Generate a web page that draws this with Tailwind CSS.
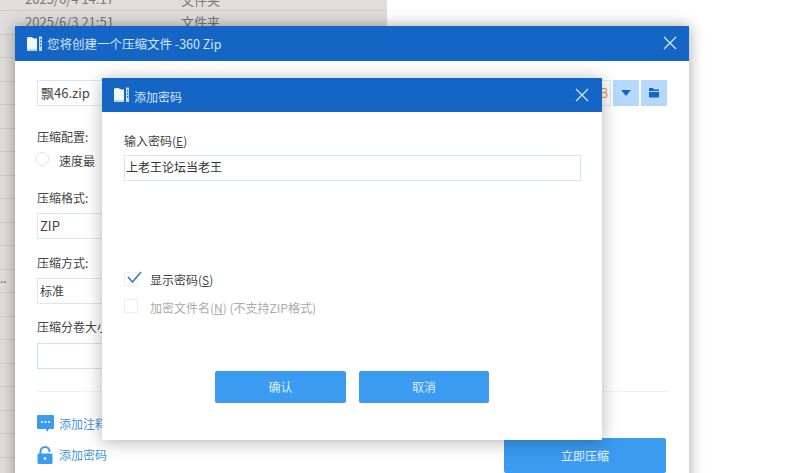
<!DOCTYPE html>
<html lang="zh">
<head>
<meta charset="utf-8">
<script src="https://cdn.jsdelivr.net/npm/@tailwindcss/browser@4"></script>
</head>
<body class="m-0 bg-white">
<div class="relative w-[800px] h-[473px] overflow-hidden bg-white font-['Noto_Sans_CJK_SC','Noto_Sans',sans-serif] text-[12px] text-[#444]">

  <!-- background explorer window -->
  <div class="absolute left-0 top-0 w-[387px] h-[473px] bg-[#e0dedd] overflow-hidden">
    <div class="h-[11px] border-b border-[#cfcecd] relative"><span class="absolute left-[25px] top-[-10px] text-[#777] text-[13px] leading-[18px]">2025/6/4 14:17</span><span class="absolute left-[181px] top-[-9px] text-[#777] text-[13px] leading-[18px]">文件夹</span></div>
    <div class="h-[23.5px] border-b border-[#cfcecd] relative"><span class="absolute left-[25px] top-[2px] text-[#777] text-[13px] leading-[18px]">2025/6/3 21:51</span><span class="absolute left-[181px] top-[2px] text-[#777] text-[13px] leading-[18px]">文件夹</span></div>
    <div class="h-[23.5px] border-b border-[#cfcecd]"></div>
    <div class="h-[23.5px] border-b border-[#cfcecd]"></div>
    <div class="h-[23.5px] border-b border-[#cfcecd]"></div>
    <div class="h-[23.5px] border-b border-[#cfcecd]"></div>
    <div class="h-[23.5px] border-b border-[#cfcecd]"></div>
    <div class="h-[23.5px] border-b border-[#cfcecd]"></div>
    <div class="h-[23.5px] border-b border-[#cfcecd]"></div>
    <div class="h-[23.5px] border-b border-[#cfcecd]"></div>
    <div class="h-[23.5px] border-b border-[#cfcecd]"></div>
    <div class="h-[23.5px] border-b border-[#cfcecd]"></div>
    <div class="h-[23.5px] border-b border-[#cfcecd] relative"><span class="absolute left-0 top-[-1px] text-[#555]">..</span></div>
    <div class="h-[23.5px] border-b border-[#cfcecd]"></div>
    <div class="h-[23.5px] border-b border-[#cfcecd]"></div>
    <div class="h-[23.5px] border-b border-[#cfcecd]"></div>
    <div class="h-[23.5px] border-b border-[#cfcecd]"></div>
    <div class="h-[23.5px] border-b border-[#cfcecd]"></div>
    <div class="h-[23.5px] border-b border-[#cfcecd]"></div>
    <div class="h-[23.5px] border-b border-[#cfcecd]"></div>
  </div>

  <!-- main window -->
  <div class="absolute left-[15px] top-[26px] w-[674px] h-[470px] bg-white shadow-[0_0_14px_rgba(0,0,0,0.36)]">
    <div class="h-[35px] bg-[#1565c4] flex items-center pl-[11px] pr-[11px] text-[#d6e6f8]">
      <svg width="18" height="18" viewBox="0 0 18 18" class="mr-[3px] shrink-0"><path d="M1 2.500C3.500 1.500 6.500 2 8 3.500L11 3.500V16H1Z" fill="#f2f7fd"/><path d="M1 14h10v2H1Z" fill="#b9d2ee"/><rect x="13" y="1.500" width="3" height="14.500" fill="#c6dcf4"/><rect x="14" y="4" width="1.200" height="1.500" fill="#1565c4"/><rect x="14" y="7" width="1.200" height="1.500" fill="#1565c4"/><rect x="14" y="10" width="1.200" height="1.500" fill="#1565c4"/></svg>
      <span class="text-[12.5px] pt-[2px]">您将创建一个压缩文件 -360 Zip</span>
      <svg width="14" height="14" viewBox="0 0 14 14" class="ml-auto mr-[1px] mb-[2px]"><path d="M1 1L13 13M13 1L1 13" stroke="#d8e8fa" stroke-width="1.200" fill="none"/></svg>
    </div>
    <div class="pl-[22px] pr-[22px] pt-[19px]">
      <div class="flex gap-[2px] h-[26px]">
        <div class="flex-1 border border-[#d7e8f4] pl-[3px] pr-[2px] flex items-center text-[13px] text-[#444]"><span>飘46.zip</span><span class="ml-auto text-[#e59a45] text-[13px]">B</span></div>
        <div class="w-[26px] bg-[#b5d8fb] flex items-center justify-center"><svg width="12" height="8" viewBox="0 0 12 8"><path d="M1 1h10L6 7Z" fill="#1565c4"/></svg></div>
        <div class="w-[26px] bg-[#b5d8fb] flex items-center justify-center"><svg width="12" height="10" viewBox="0 0 12 10"><path d="M1 0h4l1 1.500h5V3H1ZM1 4h10v5.500H1Z" fill="#1565c4"/></svg></div>
      </div>
      <div class="mt-[22px] h-[18px] leading-[18px]">压缩配置:</div>
      <div class="mt-[6px] flex items-center h-[18px]">
        <span class="w-[14px] h-[14px] rounded-full border border-[#dfe3e6] ml-[-2px] mt-[-4px]"></span>
        <span class="ml-[10px]">速度最</span>
      </div>
      <div class="mt-[19px] h-[18px] leading-[18px]">压缩格式:</div>
      <div class="mt-[6px] h-[26px] w-[200px] border border-[#d7e8f4] pl-[2px] flex items-center text-[13px]">ZIP</div>
      <div class="mt-[15px] h-[18px] leading-[18px]">压缩方式:</div>
      <div class="mt-[6px] h-[26px] w-[200px] border border-[#d7e8f4] pl-[2px] flex items-center">标准</div>
      <div class="mt-[14px] h-[18px] leading-[18px]">压缩分卷大小</div>
      <div class="mt-[7px] h-[26px] w-[200px] border border-[#d0e2f0]"></div>
      <div class="mt-[22px] border-t border-[#f1f1f1] mr-[-1px]"></div>
      <div class="flex justify-between">
        <div class="pt-[22px]">
          <div class="flex items-center h-[20px] gap-[5px] text-[#4a94d6]">
            <svg width="17" height="18" viewBox="0 0 17 18" class="shrink-0"><path d="M1 0h15a1 1 0 0 1 1 1v12a1 1 0 0 1-1 1h-4l-2 3-1-3H1a1 1 0 0 1-1-1V1a1 1 0 0 1 1-1Z" fill="#3d9bef"/><circle cx="5" cy="7" r="1" fill="#fff"/><circle cx="8.500" cy="7" r="1" fill="#fff"/><circle cx="12" cy="7" r="1" fill="#fff"/></svg>
            <span>添加注释</span>
          </div>
          <div class="flex items-center h-[20px] gap-[6px] mt-[11px] text-[#4a94d6]">
            <svg width="16" height="18" viewBox="0 0 16 18" class="shrink-0"><path d="M3.500 8V5.500a4.500 4.500 0 0 1 9 0V6" stroke="#3d9bef" stroke-width="2" fill="none"/><rect x="0.500" y="7.500" width="15" height="10.500" rx="1.500" fill="#3d9bef"/><circle cx="8" cy="12.500" r="1.300" fill="#fff"/></svg>
            <span>添加密码</span>
          </div>
        </div>
        <button class="mt-[46px] mr-[1px] w-[162px] h-[35px] rounded-[2px] bg-[#3b9bf0] text-[#e8f3fe] text-[12px]">立即压缩</button>
      </div>
    </div>
  </div>

  <!-- password dialog -->
  <div class="absolute left-[102px] top-[78px] w-[500px] h-[362px] bg-white shadow-[0_2px_16px_rgba(0,0,0,0.3)] flex flex-col">
    <div class="h-[34px] bg-[#1565c4] flex items-center pl-[11px] pr-[13px] text-[#d6e6f8]">
      <svg width="18" height="18" viewBox="0 0 18 18" class="mr-[3px] shrink-0"><path d="M1 2.500C3.500 1.500 6.500 2 8 3.500L11 3.500V16H1Z" fill="#f2f7fd"/><path d="M1 14h10v2H1Z" fill="#b9d2ee"/><rect x="13" y="1.500" width="3" height="14.500" fill="#c6dcf4"/><rect x="14" y="4" width="1.200" height="1.500" fill="#1565c4"/><rect x="14" y="7" width="1.200" height="1.500" fill="#1565c4"/><rect x="14" y="10" width="1.200" height="1.500" fill="#1565c4"/></svg>
      <span class="text-[12px] pt-[3px]">添加密码</span>
      <svg width="14" height="14" viewBox="0 0 14 14" class="ml-auto"><path d="M1 1L13 13M13 1L1 13" stroke="#d8e8fa" stroke-width="1.200" fill="none"/></svg>
    </div>
    <div class="flex-1 flex flex-col pl-[22px] pr-[21px]">
      <div class="mt-[20px] h-[18px] leading-[18px] text-[#444]">输入密码(<span class="underline">E</span>)</div>
      <div class="mt-[5px] h-[26px] border border-[#d7e8f4] pl-[1px] pb-[2px] flex items-center text-[12px] text-[#333]">上老王论坛当老王</div>
      <div class="mt-[90px] flex items-center h-[18px]">
        <span class="relative w-[14px] h-[14px] mt-[-3px] border border-[#eceef2] shrink-0">
          <svg width="17" height="14" viewBox="0 0 17 14" class="absolute left-[1px] top-[-2px]"><path d="M2 6l4.500 5L15 1" stroke="#4a7fbe" stroke-width="1.800" fill="none"/></svg>
        </span>
        <span class="ml-[12px] text-[#444]">显示密码(<span class="underline">S</span>)</span>
      </div>
      <div class="mt-[10px] flex items-center h-[18px] text-[#aaa]">
        <span class="w-[14px] h-[14px] mt-[-5px] border border-[#eeeeee] shrink-0"></span>
        <span class="ml-[12px]">加密文件名(<span class="underline">N</span>) (不支持ZIP格式)</span>
      </div>
      <div class="mt-[54px] flex justify-center gap-[13px] ml-[-1px]">
        <button class="w-[131px] h-[32px] rounded-[2px] bg-[#3b9bf0] text-[#dcedfd] text-[12px]">确认</button>
        <button class="w-[130px] h-[32px] rounded-[2px] bg-[#3b9bf0] text-[#dcedfd] text-[12px]">取消</button>
      </div>
    </div>
  </div>
</div>
</body>
</html>
